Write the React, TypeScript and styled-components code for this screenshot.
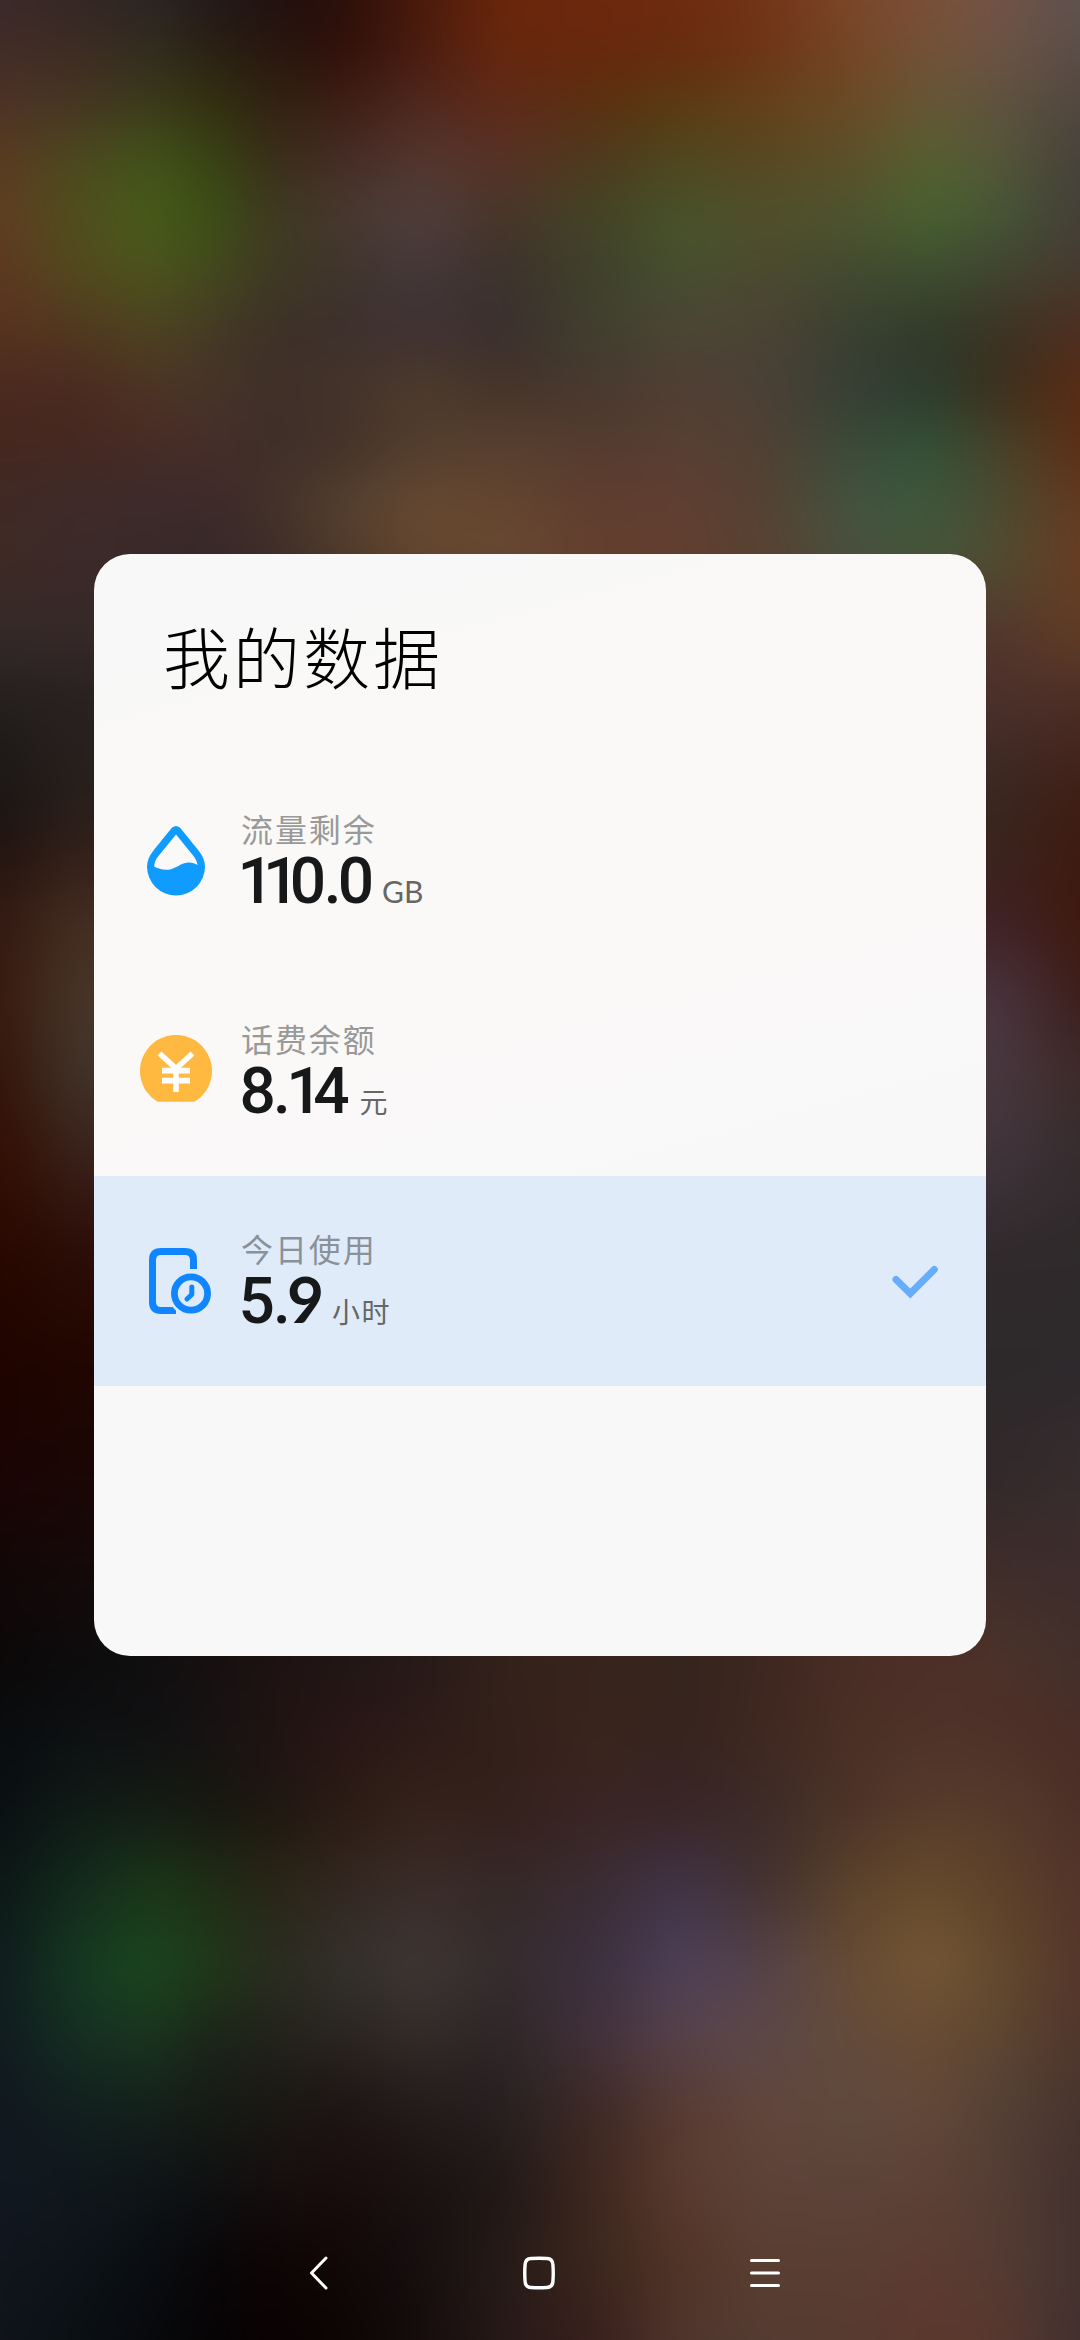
import React from "react";
import styled, { createGlobalStyle } from "styled-components";

const GlobalStyle = createGlobalStyle`
  * { box-sizing: border-box; }
  body { margin: 0; background: #1a1414; }
`;

/* The wallpaper runs past the screen edges so its blur never fades there. */
const BLEED = 60;

/* Horizontal stops shared by every row of the wallpaper colour mesh. */
const STOPS = [0, 80, 150, 210, 270, 340, 420, 500, 600, 680, 760, 860, 930, 1000, 1080];

const side = (l0: string, l1: string, r0: string, r1: string) =>
  [l0, l1, l1, l1, l1, l1, l1, r0, r0, r0, r0, r0, r0, r0, r1].join(" ");

const TOP_ROW = "3a2a2a 352724 2c2523 241a19 201110 2a0f0a 4a1a0b 6a260c 6e290d 6e2b0f 733416 7c482c 7a5038 725347 5e524f";
const BOTTOM_ROW = "10141a 0b1014 08090c 060405 0a0202 0d0404 150c0b 261918 3a201d 4f352d 543c32 583a30 5c382d 58382f 42302f";

/* [y, colours from left to right] */
const MESH: [number, string][] = [
  [-BLEED, TOP_ROW],
  [0, TOP_ROW],
  [50, "432c27 3d2c23 332d20 2a2114 281710 300f0a 4a1c10 67270e 68280e 682b0e 6d3414 754728 725238 6c5343 5a4d48"],
  [100, "4d3228 463522 3b3a1b 333010 302212 3c1d14 4f271e 5e2a18 5c3010 5a3a12 65401a 6b4b28 675736 5f5240 524740"],
  [160, "5a3b20 4b4a1f 43531b 384514 3a2e18 452c26 53372f 583127 4d3a1d 4f4820 574721 5b512b 55602f 555638 46413a"],
  [215, "5f3d22 504f1e 475c19 3c5015 3e3a20 47382f 503e3d 483529 434526 48532a 50502b 4d552f 48622f 455636 443f38"],
  [270, "5d3820 524a1e 4c541c 434a1e 3f3a22 40352c 443839 3d322d 3f412b 475030 4c4a2f 434a30 3c4f30 424431 473a30"],
  [330, "58321f 513820 4d4321 453a24 3e3028 3d302c 403235 3a2f2d 41402f 4b4535 4b4335 393f31 323a29 3b3325 4e2e20"],
  [390, "4a2a20 4a2a20 4e3324 46342a 3f3028 44332a 4d3b2c 463429 493830 513f34 4c4036 343e34 2c3c2d 3c2f1c 5a2c14"],
  [450, "45271f 452822 472b26 472e29 3f2e2a 43322a 543e2e 594030 563c2f 593f33 514034 3a4c38 345238 48432a 5c2f16"],
  [500, "402a26 3e2b29 3d2b2b 3d2a2a 433129 54402f 664932 63452f 5d3d2f 603f32 554133 425440 3e563c 4a4a30 633920"],
  [555, "3f2a24 3c2a2a 3b292a 38282a 3d2c28 503a2b 66482f 694a33 673f2f 623f30 5a4232 485240 445738 524c32 683d22"],
  [640, side("342929", "352928", "52362c", "603c25")],
  [700, side("241f1e", "282120", "4b302c", "4c2e26")],
  [790, side("1b1615", "28201c", "3a2721", "3f1f17")],
  [850, side("22140f", "33201a", "3b241e", "3d1b10")],
  [920, side("331a12", "452d21", "3f2225", "40190f")],
  [1000, side("381a10", "483629", "4a3540", "3c1e1b")],
  [1070, side("34150c", "42342a", "48383f", "3e2a29")],
  [1150, side("330f04", "3a241c", "41353c", "362c2e")],
  [1250, side("280800", "2c0e08", "312a2d", "2f2a2b")],
  [1370, side("1f0400", "200600", "2d292b", "2e292c")],
  [1480, side("1a0504", "1a0706", "33292a", "382d2e")],
  [1580, "120708 140a0a 140a0a 150c0c 1a1010 201616 271a19 33221b 37241d 35241e 3d2720 472c26 482d28 3f2e2b 3e2d2c"],
  [1655, "0c0808 0d0c0d 100f10 171010 1e1212 201616 271a19 33221b 37241d 35241e 3d2720 4a2e26 4d3028 4c322a 42302b"],
  [1730, "090c0f 0e1012 111012 161313 201313 281615 2d1b18 33201a 3a251d 36241e 3f2820 4b3026 4f332a 4e3028 4a2e27"],
  [1810, "0a1012 0f1b17 151d15 17180f 1e1711 2b1b14 35221b 34201c 3a2524 392527 3c2b28 4e3428 573c2b 553b2c 4c3028"],
  [1880, "0c1716 142a1d 1a3618 1f2c17 282515 332620 3a2c28 352827 3b2c33 403347 42302f 5c432a 664a2c 5d412a 53342a"],
  [1965, "101c1e 153a21 1b471f 1f3a19 2a2c20 33302b 3f3735 352c2d 3d3040 4e4059 54424a 694d33 745735 634a2d 55362b"],
  [2040, "111b1f 152f23 1a341e 1b2419 22221a 2a2420 322b28 2e2526 43323c 57424a 5d4848 634a3a 684b34 5d4632 50362c"],
  [2110, "11181f 121f1e 14201c 161a14 1a1814 1c1413 241a1a 262020 3f2a25 583b33 61463c 604a3e 624838 544036 46342e"],
  [2190, "121821 10171c 0f1416 0f1012 150e0e 1a0d0d 1a1111 201816 402820 5a3b2f 5c4238 5c4339 5c4137 543d34 43312e"],
  [2260, "11161e 0d1318 0a0e12 090608 0e0505 110707 151010 251a17 3d281e 513426 5a3e32 5a3e34 5c3c33 543c33 443230"],
  [2340, BOTTOM_ROW],
  [2340 + BLEED, BOTTOM_ROW],
];

const ramp = (colours: string) =>
  `linear-gradient(90deg, ${colours
    .split(" ")
    .map((c, i) => `#${c} ${STOPS[i] + BLEED}px`)
    .join(", ")})`;

const Screen = styled.div`
  position: relative;
  width: 1080px;
  height: 2340px;
  overflow: hidden;
  font-family: "Noto Sans CJK SC", sans-serif;
`;

const Wallpaper = styled.div`
  position: absolute;
  inset: -${BLEED}px;
  display: flex;
  flex-direction: column;
  filter: blur(20px);
`;

const Band = styled.div<{ $height: number; $top: string; $bottom: string }>`
  height: ${(p) => p.$height}px;
  background: ${(p) => p.$top};

  &::after {
    content: "";
    display: block;
    height: 100%;
    background: ${(p) => p.$bottom};
    -webkit-mask-image: linear-gradient(180deg, transparent, #000);
    mask-image: linear-gradient(180deg, transparent, #000);
  }
`;

const Content = styled.div`
  position: relative;
  height: 100%;
  display: flex;
  flex-direction: column;
  justify-content: space-between;
  align-items: center;
  padding-top: 554px;
`;

const Card = styled.main`
  width: 892px;
  height: 1102px;
  border-radius: 36px;
  overflow: hidden;
  background: linear-gradient(165deg, #f8f8f8 8%, #fbf9f7 24%, #fbf9f8 42%, #f8f8f8 62%);
`;

const Title = styled.h1`
  margin: 0;
  height: 202px;
  padding: 51px 0 0 69px;
  font-size: 67px;
  line-height: 100px;
  font-weight: 300;
  letter-spacing: 3px;
  color: #000;
`;

const Row = styled.div<{ $selected?: boolean }>`
  display: flex;
  align-items: center;
  height: 210px;
  padding: 0 47px 0 46px;
  background: ${(p) => (p.$selected ? "#dfebf9" : "transparent")};
`;

const RowIcon = styled.svg`
  width: 72px;
  height: 72px;
  flex: none;
`;

const Info = styled.div`
  flex: 1;
  display: flex;
  flex-direction: column;
  gap: 2px;
  padding-left: 28px;
`;

const Label = styled.div<{ $selected?: boolean }>`
  height: 40px;
  line-height: 40px;
  padding-left: 1px;
  font-size: 32px;
  letter-spacing: 1.9px;
  color: ${(p) => (p.$selected ? "#8a9199" : "#999")};
`;

const Reading = styled.div`
  display: flex;
  align-items: baseline;
  height: 65px;
  line-height: 64px;
`;

const Value = styled.div<{ $offset: number }>`
  display: flex;
  align-items: baseline;
  margin-left: ${(p) => p.$offset}px;
  font-family: Roboto, sans-serif;
  font-size: 64px;
  font-weight: 500;
  color: #17181a;
`;

const Digit = styled.span<{ $kern: number; $straight?: boolean }>`
  letter-spacing: ${(p) => p.$kern}px;
  ${(p) => p.$straight && "font-family: Lato, sans-serif; font-weight: 700; line-height: 40px;"}
`;

const Unit = styled.span<{ $gap: number; $latin?: boolean }>`
  font-family: ${(p) => (p.$latin ? "Lato, sans-serif" : '"Noto Sans CJK SC", sans-serif')};
  font-size: ${(p) => (p.$latin ? 30 : 28)}px;
  line-height: 40px;
  letter-spacing: ${(p) => (p.$latin ? 0 : 1.5)}px;
  color: #666;
  margin-left: ${(p) => p.$gap}px;
`;

const Check = styled.svg`
  width: 48px;
  height: 36px;
  flex: none;
`;

const NavBar = styled.nav`
  display: flex;
  align-items: center;
  justify-content: center;
  gap: 193px;
  width: 100%;
  height: 134px;
  padding-left: 10px;
`;

const NavIcon = styled.svg<{ $width: number }>`
  width: ${(p) => p.$width}px;
  height: 36px;
  fill: none;
  stroke: #fff;
  stroke-linecap: round;
  stroke-linejoin: round;
`;

const DropIcon = () => (
  <RowIcon viewBox="0 0 72 72">
    <path
      fill="#109cff"
      fillRule="evenodd"
      d="M32.2 2.6Q36-0.800 39.800 2.600C44 7.500 52 17.500 58.500 25.500C62.500 30.500 65 36 65 41.500A29 29 0 0 1 7 41.500C7 36 9.500 30.500 13.500 25.500C20 17.500 28 7.500 32.200 2.600ZM36 9.500L18.500 31C15.500 34.500 14.500 37.500 14.200 41.500C18 44.200 25.500 45.600 31 44.200C38 42.200 42 37.500 49 37.500C52.500 37.500 55 38.500 57.600 40C57 36.500 55.500 33.500 53.500 31Z"
    />
  </RowIcon>
);

const CoinIcon = () => (
  <RowIcon viewBox="0 0 72 72">
    <path fill="#ffb940" d="M17.500 66.800A36 36 0 1 1 54.500 66.800Z" />
    <path
      fill="none"
      stroke="#fff"
      strokeWidth="5.600"
      d="M19.500 18.500L36 33.500L52.500 18.500M22 35.600H50M22 45.600H50M36 32V57"
    />
  </RowIcon>
);

const ScreenTimeIcon = () => (
  <RowIcon viewBox="0 0 72 72" fill="none" stroke="#0f86ff">
    <path strokeWidth="7" d="M53.500 24V15Q53.500 6.500 45 6.500H21Q12.500 6.500 12.500 15V57Q12.500 65.500 21 65.500H36" />
    <circle cx="51" cy="48.500" r="22.800" fill="#dfebf9" stroke="none" />
    <circle cx="51" cy="48.500" r="16.600" strokeWidth="6.800" />
    <path strokeWidth="5" strokeLinecap="round" strokeLinejoin="round" d="M51.800 42V49.500L47 54" />
  </RowIcon>
);

type Item = {
  label: string;
  offset: number;
  digits: [string, number][];
  unit: string;
  unitGap: number;
  latin?: boolean;
  selected?: boolean;
  Icon: React.FC;
};

/* Each digit carries the kerning that follows it. */
const ITEMS: Item[] = [
  {
    label: "流量剩余",
    offset: -2.5,
    digits: [["1", -11], ["1", -9.5], ["0", -2.4], [".", -3.9], ["0", 0]],
    unit: "GB",
    unitGap: 8,
    latin: true,
    Icon: DropIcon,
  },
  {
    label: "话费余额",
    offset: -0.5,
    digits: [["8", -2.9], [".", -4.5], ["1", -9.5], ["4", 0]],
    unit: "元",
    unitGap: 10,
    Icon: CoinIcon,
  },
  {
    label: "今日使用",
    offset: -1.5,
    digits: [["5", -1.9], [".", -3.9], ["9", 0]],
    unit: "小时",
    unitGap: 8,
    selected: true,
    Icon: ScreenTimeIcon,
  },
];

export default function App() {
  return (
    <Screen>
      <GlobalStyle />
      <Wallpaper>
        {MESH.slice(0, -1).map(([y, colours], i) => (
          <Band key={y} $height={MESH[i + 1][0] - y} $top={ramp(colours)} $bottom={ramp(MESH[i + 1][1])} />
        ))}
      </Wallpaper>
      <Content>
        <Card>
          <Title>我的数据</Title>
          {ITEMS.map(({ label, offset, digits, unit, unitGap, latin, selected, Icon }) => (
            <Row key={label} $selected={selected}>
              <Icon />
              <Info>
                <Label $selected={selected}>{label}</Label>
                <Reading>
                  <Value $offset={offset}>
                    {digits.map(([d, kern], i) => (
                      <Digit key={i} $kern={kern} $straight={d === "9"}>{d}</Digit>
                    ))}
                  </Value>
                  <Unit $gap={unitGap} $latin={latin}>{unit}</Unit>
                </Reading>
              </Info>
              {selected && (
                <Check viewBox="0 0 48 36" fill="none" stroke="#66adfc" strokeWidth="7" strokeLinecap="round">
                  <path d="M5 16.500L19.300 30.500L43.300 6.500" />
                </Check>
              )}
            </Row>
          ))}
        </Card>
        <NavBar>
          <NavIcon $width={20} viewBox="0 0 20 36" strokeWidth="3">
            <path d="M17 3L2.500 18L17 33" />
          </NavIcon>
          <NavIcon $width={34} viewBox="0 0 34 36" strokeWidth="3.400">
            <path d="M9 3.500Q17 2.900 25 3.500Q30.500 3.800 30.900 9.500Q31.600 18 30.900 26.500Q30.500 32.200 25 32.500Q17 33.100 9 32.500Q3.500 32.200 3.100 26.500Q2.400 18 3.100 9.500Q3.500 3.800 9 3.500Z" />
          </NavIcon>
          <NavIcon $width={32} viewBox="0 0 32 36" strokeWidth="3">
            <path d="M2.500 5.500H29.500M2.500 18H29.500M2.500 30.500H29.500" />
          </NavIcon>
        </NavBar>
      </Content>
    </Screen>
  );
}
